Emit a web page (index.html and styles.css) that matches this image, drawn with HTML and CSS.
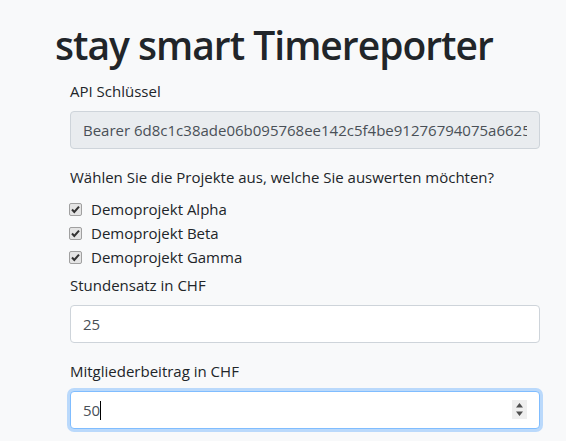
FILE: index.html
```html
<!DOCTYPE html>
<html lang="de">
<head>
<meta charset="utf-8">
<title>stay smart Timereporter</title>
<link rel="stylesheet" href="styles.css">
</head>
<body>
<main class="page">
  <h1 class="title">stay smart Timereporter</h1>
  <form class="form">
    <div class="group">
      <label class="label">API Schlüssel</label>
      <div class="control control-disabled"><span class="control-text">Bearer 6d8c1c38ade06b095768ee142c5f4be91276794075a66259f3c1e8d7a</span></div>
    </div>
    <div class="group group-checks">
      <label class="label">Wählen Sie die Projekte aus, welche Sie auswerten möchten?</label>
      <div class="check"><span class="box"><svg viewBox="0 0 13 13" width="13" height="13"><path d="M3 6.5 L5.3 9 L10 3.6" fill="none" stroke="#333" stroke-width="2"/></svg></span><span>Demoprojekt Alpha</span></div>
      <div class="check"><span class="box"><svg viewBox="0 0 13 13" width="13" height="13"><path d="M3 6.5 L5.3 9 L10 3.6" fill="none" stroke="#333" stroke-width="2"/></svg></span><span>Demoprojekt Beta</span></div>
      <div class="check"><span class="box"><svg viewBox="0 0 13 13" width="13" height="13"><path d="M3 6.5 L5.3 9 L10 3.6" fill="none" stroke="#333" stroke-width="2"/></svg></span><span>Demoprojekt Gamma</span></div>
    </div>
    <div class="group">
      <label class="label">Stundensatz in CHF</label>
      <div class="control"><span class="control-text">25</span></div>
    </div>
    <div class="group">
      <label class="label">Mitgliederbeitrag in CHF</label>
      <div class="control control-focus"><span class="control-text">50<span class="caret"></span></span>
        <span class="spin"><svg viewBox="0 0 15 19" width="15" height="19"><path d="M7.5 3 L11 7.5 H4 Z M7.5 16 L11 11.5 H4 Z" fill="#505050"/></svg></span>
      </div>
    </div>
  </form>
</main>
</body>
</html>
```
FILE: styles.css
```css
html, body {
  margin: 0;
  padding: 0;
  background: #f8f9fa;
}
body {
  font-family: "Open Sans", "Noto Sans", sans-serif;
  font-size: 15px;
  line-height: 24px;
  color: #212529;
}
.page {
  padding: 21px 26px 0 55px;
}
.title {
  margin: 0 0 10px 0;
  font-size: 39px;
  line-height: 48px;
  letter-spacing: -1px;
  font-weight: 600;
  color: #212529;
}
.form {
  margin-left: 15px;
}
.group {
  display: flex;
  flex-direction: column;
  margin-bottom: 16px;
}
.group-checks {
  margin-bottom: 4px;
}
.label {
  display: block;
  margin-bottom: 8px;
}
.control {
  position: relative;
  box-sizing: border-box;
  height: 38px;
  padding: 6px 12px;
  border: 1px solid #ced4da;
  border-radius: 4px;
  background: #fff;
  color: #495057;
  display: flex;
  align-items: center;
}
.control-text {
  display: block;
  flex: 1;
  overflow: hidden;
  white-space: nowrap;
}
.control-disabled {
  background: #e9ecef;
}
.control-focus {
  border-color: #80bdff;
  box-shadow: 0 0 0 3px rgba(0, 123, 255, 0.25);
}
.caret {
  display: inline-block;
  width: 1px;
  height: 19px;
  background: #000;
  vertical-align: -4px;
}
.spin {
  position: absolute;
  right: 12px;
  top: 8px;
  width: 15px;
  height: 19px;
  background: #efefef;
}
.spin svg {
  display: block;
}
.check {
  display: flex;
  align-items: center;
  height: 24px;
}
.box {
  box-sizing: border-box;
  width: 13px;
  height: 13px;
  margin: 0 9px 0 -1px;
  border: 1px solid #a0a0a0;
  border-radius: 2px;
  background: #e4e4e4;
  overflow: hidden;
}
.box svg {
  display: block;
  margin: -1px;
}
```
